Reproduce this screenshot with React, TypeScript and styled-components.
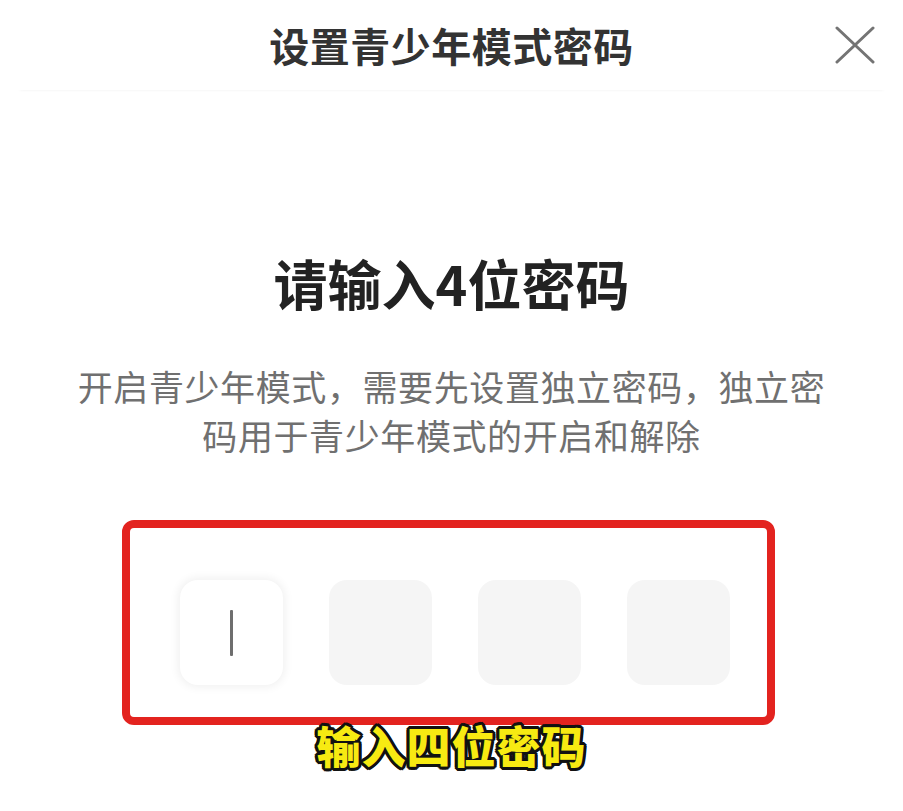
import React from 'react';
import styled, { createGlobalStyle } from 'styled-components';

const GlobalStyle = createGlobalStyle`
  html, body {
    margin: 0;
    padding: 0;
    background: #ffffff;
  }
  body {
    font-family: "Noto Sans CJK SC", "Noto Sans", sans-serif;
  }
`;

const Page = styled.div`
  position: relative;
  width: 903px;
  height: 811px;
  overflow: hidden;
  background: #ffffff;
`;

const Header = styled.header`
  display: grid;
  grid-template-columns: 1fr auto 1fr;
  align-items: center;
  height: 90px;
  margin: 0 18px;
  box-shadow: 0 2px 3px -2px #f0f0f0;
`;

const Title = styled.h1`
  grid-column: 2;
  margin: 0;
  font-size: 40px;
  line-height: 88px;
  font-weight: 700;
  color: #333333;
  letter-spacing: 0.5px;
`;

const CloseButton = styled.button`
  grid-column: 3;
  justify-self: end;
  display: flex;
  align-items: center;
  justify-content: center;
  width: 44px;
  height: 44px;
  margin-right: 8px;
  padding: 0;
  border: none;
  background: transparent;
  cursor: pointer;
`;

const Heading = styled.h2`
  margin: 163px 0 0;
  text-align: center;
  font-size: 54px;
  line-height: 60px;
  font-weight: 700;
  color: #222222;
`;

const Description = styled.p`
  width: 760px;
  margin: 48px auto 0;
  text-align: center;
  font-size: 35px;
  line-height: 49px;
  font-weight: 400;
  letter-spacing: 0.6px;
  color: #707070;
`;

const Highlight = styled.div`
  box-sizing: border-box;
  width: 653px;
  height: 205px;
  margin: 61px 0 0 122px;
  padding: 52px 0 0 50px;
  border: 8px solid #e3231f;
  border-radius: 12px;
`;

const CodeRow = styled.div`
  display: flex;
  gap: 46px;
`;

const CodeCell = styled.div<{ active?: boolean }>`
  display: flex;
  align-items: center;
  justify-content: center;
  width: 103px;
  height: 105px;
  border-radius: 18px;
  background: ${(p) => (p.active ? '#ffffff' : '#f5f5f5')};
  box-shadow: ${(p) => (p.active ? '0 0 10px 2px #f0f0f0' : 'none')};
`;

const Cursor = styled.span`
  display: block;
  width: 3px;
  height: 46px;
  border-radius: 1px;
  background: #6e6e6e;
`;

const Caption = styled.div`
  position: absolute;
  top: 720px;
  left: 0;
  right: 0;
  text-align: center;
  font-size: 44px;
  line-height: 50px;
  font-weight: 900;
  color: #f7ea12;
  letter-spacing: 1px;
  text-shadow:
    2px 0 0 #111, -2px 0 0 #111, 0 2px 0 #111, 0 -2px 0 #111,
    2px 2px 0 #111, -2px -2px 0 #111, 2px -2px 0 #111, -2px 2px 0 #111,
    3px 1px 0 #111, -3px 1px 0 #111, 1px 3px 0 #111, -1px -3px 0 #111,
    3px -1px 0 #111, -3px -1px 0 #111, 1px -3px 0 #111, -1px 3px 0 #111;
`;

function CloseIcon() {
  return (
    <svg width="40" height="40" viewBox="0 0 40 40" fill="none">
      <path
        d="M2 3 L38 37 M38 3 L2 37"
        stroke="#747474"
        strokeWidth="3"
        strokeLinecap="round"
      />
    </svg>
  );
}

const cells = [0, 1, 2, 3];

function App(): React.ReactElement {
  return (
    <Page>
      <GlobalStyle />
      <Header>
        <Title>设置青少年模式密码</Title>
        <CloseButton aria-label="关闭">
          <CloseIcon />
        </CloseButton>
      </Header>
      <Heading>请输入4位密码</Heading>
      <Description>
        开启青少年模式，需要先设置独立密码，独立密码用于青少年模式的开启和解除
      </Description>
      <Highlight>
        <CodeRow>
          {cells.map((i) => (
            <CodeCell key={i} active={i === 0}>
              {i === 0 && <Cursor />}
            </CodeCell>
          ))}
        </CodeRow>
      </Highlight>
      <Caption>输入四位密码</Caption>
    </Page>
  );
}

export default App;
